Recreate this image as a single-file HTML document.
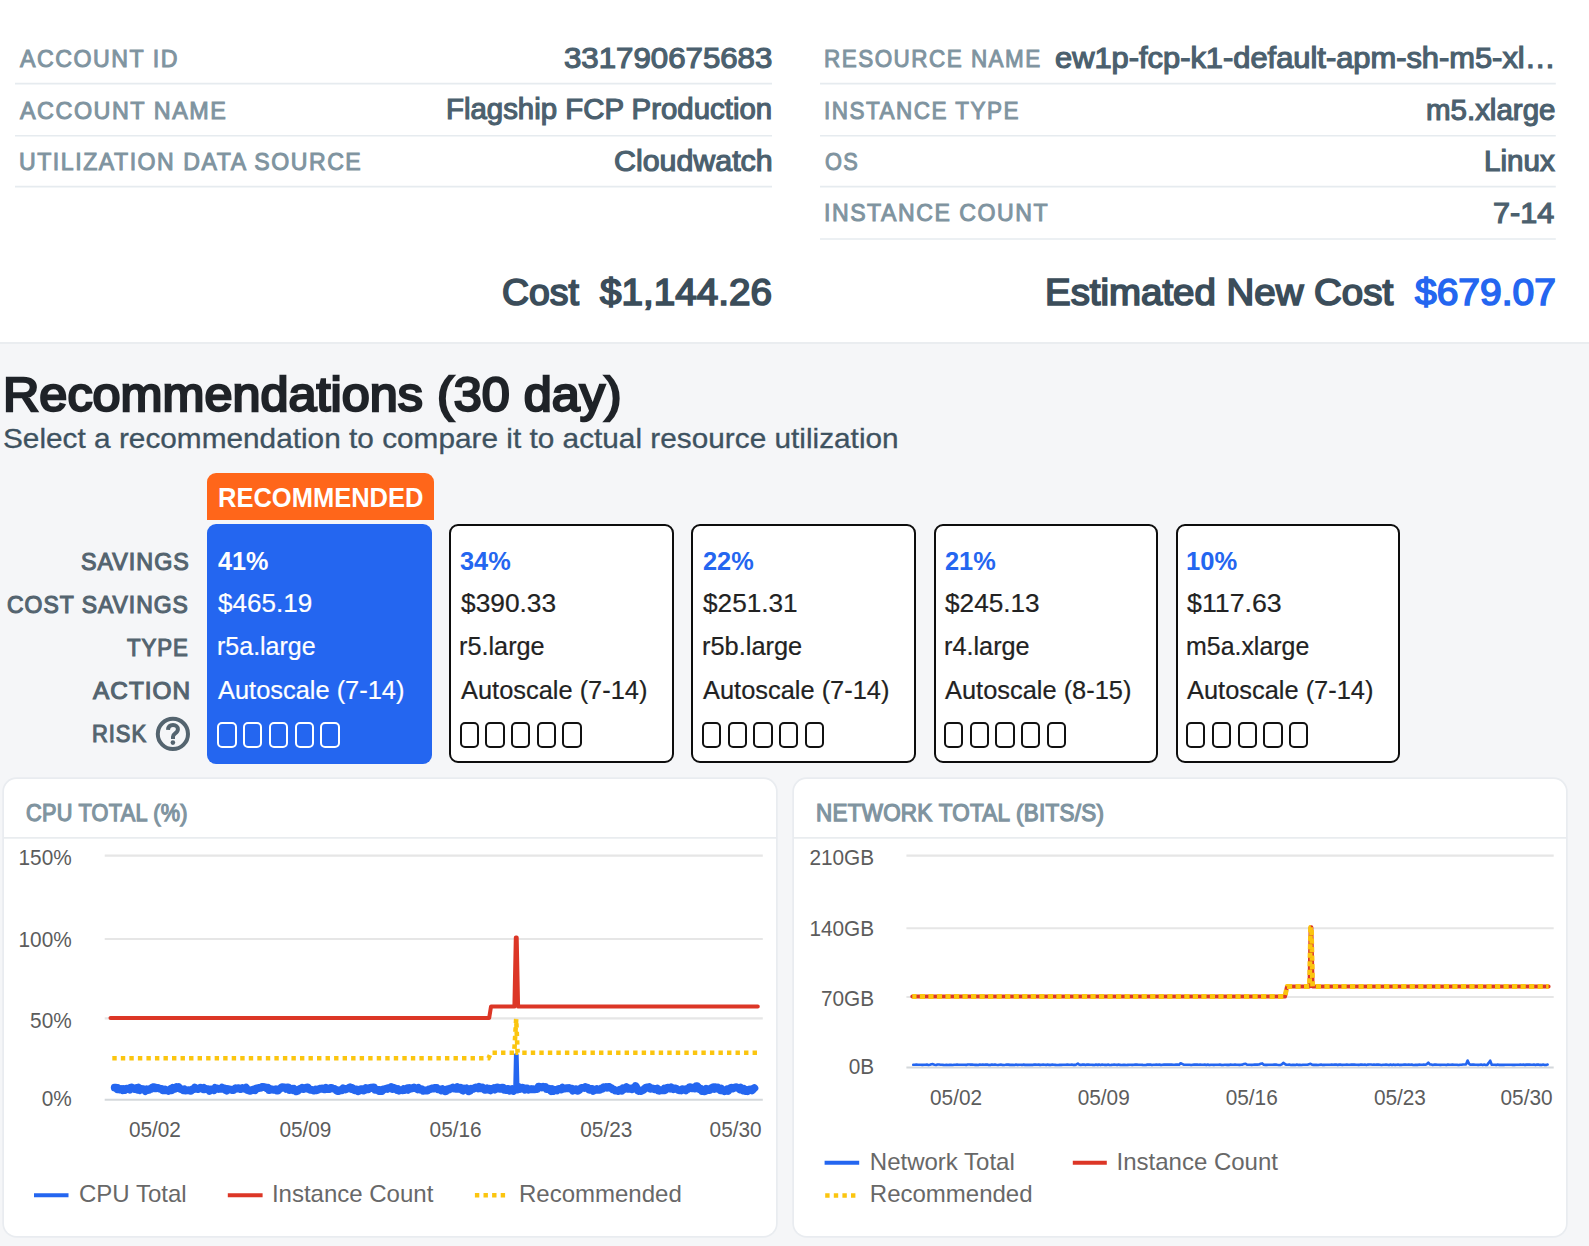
<!DOCTYPE html>
<html><head><meta charset="utf-8"><title>Rightsizing</title>
<style>
html,body{margin:0;padding:0}
body{width:1589px;height:1246px;position:relative;overflow:hidden;background:#f5f6f8;font-family:"Liberation Sans", sans-serif;}
.t{position:absolute;white-space:nowrap;transform-origin:0 50%;display:block}
.ln{position:absolute;height:1.8px;background:#e6ebef}
</style></head>
<body>
<div style="position:absolute;left:0;top:0;width:1589px;height:342px;background:#fff;border-bottom:2px solid #eaedf0"></div>
<div style="position:absolute;left:207px;top:472.8px;width:226.8px;height:47.2px;background:#ff661a;border-radius:9px 9px 0 0"></div>
<div style="position:absolute;left:207.0px;top:524px;width:225.2px;height:239.8px;background:#2466f0;border-radius:9px"></div>
<div style="position:absolute;left:217.40px;top:722px;width:19.3px;height:25.9px;border:2px solid #fff;border-radius:5px;box-sizing:border-box"></div>
<div style="position:absolute;left:243.12px;top:722px;width:19.3px;height:25.9px;border:2px solid #fff;border-radius:5px;box-sizing:border-box"></div>
<div style="position:absolute;left:268.84px;top:722px;width:19.3px;height:25.9px;border:2px solid #fff;border-radius:5px;box-sizing:border-box"></div>
<div style="position:absolute;left:294.56px;top:722px;width:19.3px;height:25.9px;border:2px solid #fff;border-radius:5px;box-sizing:border-box"></div>
<div style="position:absolute;left:320.28px;top:722px;width:19.3px;height:25.9px;border:2px solid #fff;border-radius:5px;box-sizing:border-box"></div>
<div style="position:absolute;left:449.2px;top:524px;width:224.5px;height:239.4px;background:#fff;border:2.1px solid #0d0d0d;border-radius:9px;box-sizing:border-box"></div>
<div style="position:absolute;left:459.60px;top:722px;width:19.3px;height:25.9px;border:2px solid #111;border-radius:5px;box-sizing:border-box"></div>
<div style="position:absolute;left:485.32px;top:722px;width:19.3px;height:25.9px;border:2px solid #111;border-radius:5px;box-sizing:border-box"></div>
<div style="position:absolute;left:511.04px;top:722px;width:19.3px;height:25.9px;border:2px solid #111;border-radius:5px;box-sizing:border-box"></div>
<div style="position:absolute;left:536.76px;top:722px;width:19.3px;height:25.9px;border:2px solid #111;border-radius:5px;box-sizing:border-box"></div>
<div style="position:absolute;left:562.48px;top:722px;width:19.3px;height:25.9px;border:2px solid #111;border-radius:5px;box-sizing:border-box"></div>
<div style="position:absolute;left:691.4px;top:524px;width:224.5px;height:239.4px;background:#fff;border:2.1px solid #0d0d0d;border-radius:9px;box-sizing:border-box"></div>
<div style="position:absolute;left:701.80px;top:722px;width:19.3px;height:25.9px;border:2px solid #111;border-radius:5px;box-sizing:border-box"></div>
<div style="position:absolute;left:727.52px;top:722px;width:19.3px;height:25.9px;border:2px solid #111;border-radius:5px;box-sizing:border-box"></div>
<div style="position:absolute;left:753.24px;top:722px;width:19.3px;height:25.9px;border:2px solid #111;border-radius:5px;box-sizing:border-box"></div>
<div style="position:absolute;left:778.96px;top:722px;width:19.3px;height:25.9px;border:2px solid #111;border-radius:5px;box-sizing:border-box"></div>
<div style="position:absolute;left:804.68px;top:722px;width:19.3px;height:25.9px;border:2px solid #111;border-radius:5px;box-sizing:border-box"></div>
<div style="position:absolute;left:933.6px;top:524px;width:224.5px;height:239.4px;background:#fff;border:2.1px solid #0d0d0d;border-radius:9px;box-sizing:border-box"></div>
<div style="position:absolute;left:944.00px;top:722px;width:19.3px;height:25.9px;border:2px solid #111;border-radius:5px;box-sizing:border-box"></div>
<div style="position:absolute;left:969.72px;top:722px;width:19.3px;height:25.9px;border:2px solid #111;border-radius:5px;box-sizing:border-box"></div>
<div style="position:absolute;left:995.44px;top:722px;width:19.3px;height:25.9px;border:2px solid #111;border-radius:5px;box-sizing:border-box"></div>
<div style="position:absolute;left:1021.16px;top:722px;width:19.3px;height:25.9px;border:2px solid #111;border-radius:5px;box-sizing:border-box"></div>
<div style="position:absolute;left:1046.88px;top:722px;width:19.3px;height:25.9px;border:2px solid #111;border-radius:5px;box-sizing:border-box"></div>
<div style="position:absolute;left:1175.8px;top:524px;width:224.5px;height:239.4px;background:#fff;border:2.1px solid #0d0d0d;border-radius:9px;box-sizing:border-box"></div>
<div style="position:absolute;left:1186.20px;top:722px;width:19.3px;height:25.9px;border:2px solid #111;border-radius:5px;box-sizing:border-box"></div>
<div style="position:absolute;left:1211.92px;top:722px;width:19.3px;height:25.9px;border:2px solid #111;border-radius:5px;box-sizing:border-box"></div>
<div style="position:absolute;left:1237.64px;top:722px;width:19.3px;height:25.9px;border:2px solid #111;border-radius:5px;box-sizing:border-box"></div>
<div style="position:absolute;left:1263.36px;top:722px;width:19.3px;height:25.9px;border:2px solid #111;border-radius:5px;box-sizing:border-box"></div>
<div style="position:absolute;left:1289.08px;top:722px;width:19.3px;height:25.9px;border:2px solid #111;border-radius:5px;box-sizing:border-box"></div>
<svg style="position:absolute;left:0;top:700px" width="220" height="60" viewBox="0 700 220 60"><circle cx="172.9" cy="733.9" r="15.1" fill="none" stroke="#54646f" stroke-width="4"/><path d="M168 729.8C168.2 726.6 170.2 725 173 725C175.9 725 177.9 726.7 177.9 729.2C177.9 731.4 176.6 732.4 175.2 733.4C173.8 734.4 173 735.2 173 736.8V739" fill="none" stroke="#54646f" stroke-width="4"/><circle cx="172.9" cy="742.6" r="2.3" fill="#54646f"/></svg>
<div style="position:absolute;left:3.8px;top:778.8px;width:772.4px;height:457.3px;background:#fff;box-shadow:0 0 0 1.7px #e9ecf0;border-radius:12.5px"></div>
<div style="position:absolute;left:793.7px;top:778.8px;width:772.4px;height:457.3px;background:#fff;box-shadow:0 0 0 1.7px #e9ecf0;border-radius:12.5px"></div>
<svg style="position:absolute;left:0;top:0" width="1589" height="1246" viewBox="0 0 1589 1246">
<line x1="15" x2="772" y1="83.6" y2="83.6" stroke="#e6ebef" stroke-width="1.6"/>
<line x1="15" x2="772" y1="135.7" y2="135.7" stroke="#e6ebef" stroke-width="1.6"/>
<line x1="15" x2="772" y1="186.6" y2="186.6" stroke="#e6ebef" stroke-width="1.6"/>
<line x1="820" x2="1555.8" y1="83.6" y2="83.6" stroke="#e6ebef" stroke-width="1.6"/>
<line x1="820" x2="1555.8" y1="135.7" y2="135.7" stroke="#e6ebef" stroke-width="1.6"/>
<line x1="820" x2="1555.8" y1="186.6" y2="186.6" stroke="#e6ebef" stroke-width="1.6"/>
<line x1="820" x2="1555.8" y1="239.0" y2="239.0" stroke="#e6ebef" stroke-width="1.6"/>
<line x1="3.8" x2="776.2" y1="837.9" y2="837.9" stroke="#e9ecef" stroke-width="1.9"/>
<line x1="793.7" x2="1566.1" y1="837.9" y2="837.9" stroke="#e9ecef" stroke-width="1.9"/>
<line x1="104.7" x2="762.8" y1="855.6" y2="855.6" stroke="#e6e6e6" stroke-width="2.1"/>
<line x1="104.7" x2="762.8" y1="939.0" y2="939.0" stroke="#e6e6e6" stroke-width="2.1"/>
<line x1="104.7" x2="762.8" y1="1018.4" y2="1018.4" stroke="#e6e6e6" stroke-width="2.1"/>
<line x1="104.7" x2="762.8" y1="1099.8" y2="1099.8" stroke="#d4d8db" stroke-width="2"/>
<path d="M114.7 1087.7 L115.8 1087.6 L117.0 1089.1 L118.1 1088.1 L119.3 1089.6 L120.4 1089.5 L121.6 1089.0 L122.7 1090.2 L123.8 1089.1 L125.0 1090.0 L126.1 1088.9 L127.3 1088.6 L128.4 1089.0 L129.6 1089.6 L130.7 1087.6 L131.8 1087.5 L133.0 1088.3 L134.1 1089.0 L135.3 1088.2 L136.4 1087.9 L137.5 1089.6 L138.7 1087.7 L139.8 1090.1 L141.0 1089.1 L142.1 1089.0 L143.3 1089.2 L144.4 1089.8 L145.5 1091.0 L146.7 1089.3 L147.8 1090.0 L149.0 1089.9 L150.1 1088.8 L151.3 1088.9 L152.4 1087.4 L153.5 1087.1 L154.7 1087.3 L155.8 1088.4 L157.0 1087.9 L158.1 1087.8 L159.3 1088.7 L160.4 1088.8 L161.5 1088.8 L162.7 1090.3 L163.8 1090.4 L165.0 1089.5 L166.1 1090.4 L167.2 1090.3 L168.4 1091.0 L169.5 1090.3 L170.7 1088.9 L171.8 1090.2 L173.0 1087.8 L174.1 1088.2 L175.2 1088.7 L176.4 1087.1 L177.5 1087.9 L178.7 1087.0 L179.8 1088.7 L181.0 1089.2 L182.1 1089.1 L183.2 1090.2 L184.4 1089.3 L185.5 1090.5 L186.7 1090.4 L187.8 1090.4 L189.0 1090.1 L190.1 1090.8 L191.2 1090.8 L192.4 1089.3 L193.5 1089.4 L194.7 1087.6 L195.8 1088.8 L196.9 1088.4 L198.1 1089.1 L199.2 1088.7 L200.4 1087.6 L201.5 1088.1 L202.7 1089.1 L203.8 1087.9 L204.9 1089.3 L206.1 1089.0 L207.2 1089.1 L208.4 1089.1 L209.5 1090.9 L210.7 1089.3 L211.8 1089.4 L212.9 1089.4 L214.1 1090.2 L215.2 1087.9 L216.4 1088.5 L217.5 1088.4 L218.7 1089.0 L219.8 1088.7 L220.9 1088.9 L222.1 1087.6 L223.2 1088.2 L224.4 1088.4 L225.5 1090.0 L226.6 1090.6 L227.8 1089.0 L228.9 1089.3 L230.1 1089.6 L231.2 1089.6 L232.4 1090.1 L233.5 1090.1 L234.6 1089.1 L235.8 1088.1 L236.9 1088.7 L238.1 1088.2 L239.2 1088.4 L240.4 1089.1 L241.5 1088.4 L242.6 1088.0 L243.8 1088.5 L244.9 1088.9 L246.1 1087.7 L247.2 1090.1 L248.4 1090.2 L249.5 1090.8 L250.6 1090.8 L251.8 1090.0 L252.9 1090.0 L254.1 1089.2 L255.2 1090.2 L256.3 1088.5 L257.5 1088.1 L258.6 1088.1 L259.8 1087.6 L260.9 1087.8 L262.1 1086.9 L263.2 1086.8 L264.3 1087.2 L265.5 1087.3 L266.6 1088.2 L267.8 1087.7 L268.9 1090.1 L270.1 1089.9 L271.2 1089.1 L272.3 1089.5 L273.5 1089.9 L274.6 1089.9 L275.8 1089.2 L276.9 1090.7 L278.1 1090.7 L279.2 1089.0 L280.3 1088.7 L281.5 1087.4 L282.6 1087.2 L283.8 1087.6 L284.9 1087.4 L286.0 1088.8 L287.2 1087.4 L288.3 1087.4 L289.5 1090.0 L290.6 1089.4 L291.8 1088.8 L292.9 1090.1 L294.0 1089.0 L295.2 1090.3 L296.3 1091.4 L297.5 1090.9 L298.6 1090.2 L299.8 1088.9 L300.9 1088.7 L302.0 1087.9 L303.2 1089.0 L304.3 1088.2 L305.5 1088.6 L306.6 1087.6 L307.8 1087.4 L308.9 1089.1 L310.0 1089.8 L311.2 1089.8 L312.3 1090.1 L313.5 1090.5 L314.6 1090.6 L315.7 1089.5 L316.9 1090.3 L318.0 1089.8 L319.2 1088.9 L320.3 1088.6 L321.5 1088.8 L322.6 1088.4 L323.7 1089.1 L324.9 1089.4 L326.0 1087.9 L327.2 1089.0 L328.3 1089.1 L329.5 1089.2 L330.6 1088.0 L331.7 1088.0 L332.9 1088.4 L334.0 1088.7 L335.2 1089.1 L336.3 1090.3 L337.5 1091.2 L338.6 1091.1 L339.7 1090.1 L340.9 1090.3 L342.0 1090.4 L343.2 1088.3 L344.3 1089.3 L345.4 1089.5 L346.6 1088.9 L347.7 1088.6 L348.9 1087.9 L350.0 1087.2 L351.2 1088.8 L352.3 1088.0 L353.4 1089.5 L354.6 1090.3 L355.7 1089.3 L356.9 1089.6 L358.0 1091.2 L359.2 1090.8 L360.3 1089.4 L361.4 1089.2 L362.6 1089.1 L363.7 1090.6 L364.9 1090.0 L366.0 1088.0 L367.2 1089.3 L368.3 1089.4 L369.4 1088.4 L370.6 1087.6 L371.7 1088.1 L372.9 1087.3 L374.0 1087.3 L375.1 1089.9 L376.3 1089.6 L377.4 1089.6 L378.6 1090.9 L379.7 1090.0 L380.9 1091.1 L382.0 1091.0 L383.1 1089.4 L384.3 1089.3 L385.4 1089.0 L386.6 1088.5 L387.7 1089.0 L388.9 1087.9 L390.0 1088.0 L391.1 1087.1 L392.3 1088.9 L393.4 1087.7 L394.6 1088.1 L395.7 1088.7 L396.9 1089.9 L398.0 1089.1 L399.1 1090.6 L400.3 1089.9 L401.4 1090.2 L402.6 1090.3 L403.7 1089.1 L404.8 1089.9 L406.0 1089.0 L407.1 1088.3 L408.3 1089.8 L409.4 1087.9 L410.6 1088.3 L411.7 1088.7 L412.8 1088.1 L414.0 1087.5 L415.1 1088.1 L416.3 1088.4 L417.4 1089.3 L418.6 1088.0 L419.7 1089.5 L420.8 1089.1 L422.0 1089.4 L423.1 1090.8 L424.3 1090.3 L425.4 1090.3 L426.6 1090.6 L427.7 1090.7 L428.8 1089.3 L430.0 1089.3 L431.1 1088.7 L432.3 1088.4 L433.4 1088.6 L434.5 1087.9 L435.7 1088.0 L436.8 1088.0 L438.0 1089.4 L439.1 1089.1 L440.3 1089.9 L441.4 1090.5 L442.5 1089.2 L443.7 1090.2 L444.8 1091.3 L446.0 1091.1 L447.1 1089.3 L448.3 1089.1 L449.4 1089.6 L450.5 1088.3 L451.7 1088.3 L452.8 1087.6 L454.0 1088.7 L455.1 1088.7 L456.3 1088.9 L457.4 1087.1 L458.5 1088.6 L459.7 1088.8 L460.8 1087.9 L462.0 1090.0 L463.1 1090.6 L464.3 1088.5 L465.4 1089.6 L466.5 1088.4 L467.7 1089.6 L468.8 1091.3 L470.0 1090.7 L471.1 1088.8 L472.2 1089.1 L473.4 1088.9 L474.5 1088.1 L475.7 1087.5 L476.8 1087.6 L478.0 1088.5 L479.1 1086.8 L480.2 1088.3 L481.4 1088.3 L482.5 1087.6 L483.7 1088.8 L484.8 1089.8 L486.0 1089.9 L487.1 1088.5 L488.2 1089.7 L489.4 1088.8 L490.5 1090.3 L491.7 1088.9 L492.8 1089.0 L494.0 1088.1 L495.1 1089.5 L496.2 1087.9 L497.4 1087.3 L498.5 1087.8 L499.7 1088.9 L500.8 1088.8 L501.9 1087.6 L503.1 1087.6 L504.2 1089.8 L505.4 1089.4 L506.5 1090.1 L507.7 1088.9 L508.8 1089.1 L509.9 1090.7 L511.1 1090.0 L512.2 1089.1 L513.4 1090.9 L514.5 1089.8 L515.7 1089.9 L516.8 1087.8 L517.9 1089.3 L519.1 1087.1 L520.2 1088.9 L521.4 1087.8 L522.5 1087.7 L523.7 1088.4 L524.8 1089.6 L525.9 1088.4 L527.1 1088.4 L528.2 1089.7 L529.4 1089.3 L530.5 1089.2 L531.6 1089.4 L532.8 1089.1 L533.9 1089.3 L535.1 1089.3 L536.2 1089.0 L537.4 1089.0 L538.5 1086.6 L539.6 1086.9 L540.8 1086.8 L541.9 1087.6 L543.1 1086.8 L544.2 1087.5 L545.4 1087.1 L546.5 1089.2 L547.6 1089.1 L548.8 1088.6 L549.9 1089.7 L551.1 1091.0 L552.2 1089.2 L553.4 1091.0 L554.5 1090.0 L555.6 1090.0 L556.8 1090.5 L557.9 1089.1 L559.1 1089.0 L560.2 1089.1 L561.3 1089.5 L562.5 1087.7 L563.6 1088.8 L564.8 1088.5 L565.9 1088.4 L567.1 1088.1 L568.2 1088.3 L569.3 1088.0 L570.5 1088.5 L571.6 1088.7 L572.8 1090.6 L573.9 1089.6 L575.1 1089.4 L576.2 1089.2 L577.3 1090.8 L578.5 1090.6 L579.6 1089.7 L580.8 1088.4 L581.9 1087.9 L583.1 1087.8 L584.2 1088.0 L585.3 1087.1 L586.5 1087.9 L587.6 1087.6 L588.8 1089.5 L589.9 1089.9 L591.0 1089.2 L592.2 1088.9 L593.3 1090.9 L594.5 1089.6 L595.6 1089.9 L596.8 1089.0 L597.9 1089.9 L599.0 1089.9 L600.2 1089.6 L601.3 1088.5 L602.5 1088.9 L603.6 1087.3 L604.8 1087.6 L605.9 1087.0 L607.0 1087.7 L608.2 1086.9 L609.3 1087.0 L610.5 1088.0 L611.6 1088.2 L612.8 1089.4 L613.9 1089.6 L615.0 1090.5 L616.2 1090.5 L617.3 1090.8 L618.5 1091.1 L619.6 1089.8 L620.7 1089.5 L621.9 1090.7 L623.0 1088.3 L624.2 1089.3 L625.3 1088.8 L626.5 1087.1 L627.6 1088.8 L628.7 1088.9 L629.9 1088.3 L631.0 1088.8 L632.2 1089.3 L633.3 1088.0 L634.5 1088.3 L635.6 1086.0 L636.7 1087.9 L637.9 1090.6 L639.0 1091.0 L640.2 1090.4 L641.3 1091.0 L642.5 1090.3 L643.6 1089.9 L644.7 1088.5 L645.9 1087.6 L647.0 1087.5 L648.2 1087.8 L649.3 1087.0 L650.4 1088.8 L651.6 1088.2 L652.7 1088.6 L653.9 1088.9 L655.0 1089.4 L656.2 1089.3 L657.3 1088.5 L658.4 1090.7 L659.6 1090.8 L660.7 1090.3 L661.9 1090.3 L663.0 1090.4 L664.2 1088.7 L665.3 1090.0 L666.4 1088.4 L667.6 1087.6 L668.7 1087.8 L669.9 1088.6 L671.0 1087.3 L672.2 1088.5 L673.3 1089.2 L674.4 1088.3 L675.6 1088.4 L676.7 1089.0 L677.9 1089.8 L679.0 1090.4 L680.1 1090.3 L681.3 1090.5 L682.4 1089.2 L683.6 1089.3 L684.7 1089.4 L685.9 1090.3 L687.0 1088.9 L688.1 1089.1 L689.3 1087.4 L690.4 1087.2 L691.6 1087.5 L692.7 1088.4 L693.9 1088.4 L695.0 1088.5 L696.1 1086.2 L697.3 1086.2 L698.4 1088.1 L699.6 1089.4 L700.7 1088.9 L701.9 1091.0 L703.0 1089.5 L704.1 1091.4 L705.3 1091.2 L706.4 1088.8 L707.6 1089.5 L708.7 1090.0 L709.8 1090.0 L711.0 1088.4 L712.1 1087.7 L713.3 1087.3 L714.4 1089.0 L715.6 1087.3 L716.7 1088.4 L717.8 1087.6 L719.0 1088.8 L720.1 1090.2 L721.3 1088.6 L722.4 1090.6 L723.6 1090.1 L724.7 1091.2 L725.8 1090.7 L727.0 1089.5 L728.1 1090.9 L729.3 1089.5 L730.4 1088.1 L731.6 1087.6 L732.7 1088.5 L733.8 1088.1 L735.0 1087.5 L736.1 1087.1 L737.3 1087.6 L738.4 1087.8 L739.5 1089.3 L740.7 1087.6 L741.8 1089.8 L743.0 1090.4 L744.1 1089.0 L745.3 1091.1 L746.4 1090.8 L747.5 1091.2 L748.7 1089.6 L749.8 1089.5 L751.0 1089.3 L752.1 1090.3 L753.3 1089.0 L754.4 1088.1" fill="none" stroke="#2466f0" stroke-width="7.8" stroke-linejoin="round" stroke-linecap="round"/>
<path d="M515.3 1088 L516 1055 L516.6 1055 L517.4 1088" fill="none" stroke="#2466f0" stroke-width="4.2" stroke-linejoin="round" stroke-linecap="round"/>
<path d="M110.5 1017.9 H489.2 L491 1006.6 H514.4 L515.8 937.5 L516.7 937.5 L518.1 1006.6 H757.8" fill="none" stroke="#dc3626" stroke-width="4" stroke-linecap="round" stroke-linejoin="round"/>
<path d="M112.3 1058.3 H488.5 L491 1052.7 H514.2 L516.2 1019 L517.6 1052.7 H757.5" fill="none" stroke="#fbc50f" stroke-width="4.6" stroke-dasharray="4.4 4.13" stroke-linejoin="miter"/>
<line x1="906.4" x2="1553.7" y1="855.6" y2="855.6" stroke="#e6e6e6" stroke-width="2.1"/>
<line x1="906.4" x2="1553.7" y1="928.2" y2="928.2" stroke="#e6e6e6" stroke-width="2.1"/>
<line x1="906.4" x2="1553.7" y1="997.0" y2="997.0" stroke="#e6e6e6" stroke-width="2.1"/>
<line x1="906.4" x2="1553.7" y1="1067.6" y2="1067.6" stroke="#d4d8db" stroke-width="2"/>
<path d="M912.3 996.5 H1285 L1287 986.5 H1309.5 L1310.6 927.3 L1311.4 927.3 L1312.6 986.5 H1548.6" fill="none" stroke="#dc3626" stroke-width="4" stroke-linecap="round" stroke-linejoin="round"/>
<path d="M912.3 996.5 H1285 L1287 986.5 H1309.5 L1310.6 927.3 L1311.4 927.3 L1312.6 986.5 H1548.6" fill="none" stroke="#fbc50f" stroke-width="4.8" stroke-dasharray="5.2 3.33" stroke-dashoffset="1" stroke-linejoin="round"/>
<path d="M913.3 1064.8 L914.8 1064.7 L916.3 1064.5 L917.8 1064.8 L919.3 1064.7 L920.9 1064.7 L922.4 1064.9 L923.9 1064.7 L925.4 1064.7 L926.9 1064.6 L928.4 1065.0 L929.9 1064.8 L931.4 1064.3 L932.9 1064.1 L934.4 1064.7 L936.0 1065.0 L937.5 1064.5 L939.0 1064.5 L940.5 1064.7 L942.0 1064.7 L943.5 1064.9 L945.0 1065.0 L946.5 1064.7 L948.0 1065.0 L949.5 1064.9 L951.1 1064.9 L952.6 1065.0 L954.1 1064.8 L955.6 1064.8 L957.1 1064.6 L958.6 1064.7 L960.1 1064.7 L961.6 1064.8 L963.1 1064.7 L964.6 1064.8 L966.2 1064.9 L967.7 1064.5 L969.2 1064.5 L970.7 1064.6 L972.2 1064.6 L973.7 1064.8 L975.2 1064.9 L976.7 1064.9 L978.2 1065.0 L979.8 1064.6 L981.3 1064.8 L982.8 1064.6 L984.3 1064.8 L985.8 1064.5 L987.3 1064.6 L988.8 1065.0 L990.3 1064.9 L991.8 1064.5 L993.3 1064.8 L994.9 1064.5 L996.4 1064.8 L997.9 1065.0 L999.4 1064.7 L1000.9 1064.6 L1002.4 1064.9 L1003.9 1065.0 L1005.4 1064.8 L1006.9 1064.5 L1008.4 1064.6 L1010.0 1064.9 L1011.5 1064.9 L1013.0 1064.9 L1014.5 1065.0 L1016.0 1064.6 L1017.5 1064.9 L1019.0 1064.7 L1020.5 1064.8 L1022.0 1064.9 L1023.5 1064.6 L1025.1 1064.9 L1026.6 1064.7 L1028.1 1064.9 L1029.6 1064.8 L1031.1 1064.9 L1032.6 1064.9 L1034.1 1064.5 L1035.6 1064.6 L1037.1 1064.8 L1038.6 1064.6 L1040.2 1064.9 L1041.7 1064.8 L1043.2 1064.6 L1044.7 1064.7 L1046.2 1064.9 L1047.7 1064.5 L1049.2 1064.9 L1050.7 1064.9 L1052.2 1064.6 L1053.8 1064.8 L1055.3 1064.9 L1056.8 1065.0 L1058.3 1065.0 L1059.8 1064.7 L1061.3 1064.9 L1062.8 1064.7 L1064.3 1064.8 L1065.8 1064.8 L1067.3 1064.5 L1068.9 1064.8 L1070.4 1064.7 L1071.9 1064.6 L1073.4 1064.9 L1074.9 1064.9 L1076.4 1064.4 L1077.9 1063.6 L1079.4 1064.7 L1080.9 1064.9 L1082.4 1064.6 L1084.0 1064.5 L1085.5 1064.9 L1087.0 1064.5 L1088.5 1064.6 L1090.0 1064.7 L1091.5 1064.8 L1093.0 1064.9 L1094.5 1065.0 L1096.0 1064.5 L1097.5 1064.9 L1099.1 1064.6 L1100.6 1064.9 L1102.1 1064.6 L1103.6 1064.7 L1105.1 1064.9 L1106.6 1064.9 L1108.1 1064.6 L1109.6 1065.0 L1111.1 1064.9 L1112.7 1064.7 L1114.2 1064.6 L1115.7 1064.7 L1117.2 1064.9 L1118.7 1064.5 L1120.2 1064.9 L1121.7 1065.0 L1123.2 1064.9 L1124.7 1064.8 L1126.2 1065.0 L1127.8 1064.9 L1129.3 1064.8 L1130.8 1064.7 L1132.3 1064.9 L1133.8 1064.8 L1135.3 1064.6 L1136.8 1064.5 L1138.3 1064.7 L1139.8 1064.7 L1141.3 1064.7 L1142.9 1064.9 L1144.4 1065.0 L1145.9 1065.0 L1147.4 1064.5 L1148.9 1064.6 L1150.4 1064.5 L1151.9 1065.0 L1153.4 1064.7 L1154.9 1064.8 L1156.4 1064.6 L1158.0 1064.8 L1159.5 1064.5 L1161.0 1065.0 L1162.5 1064.7 L1164.0 1064.6 L1165.5 1064.5 L1167.0 1064.6 L1168.5 1064.6 L1170.0 1064.6 L1171.6 1064.5 L1173.1 1064.8 L1174.6 1064.7 L1176.1 1064.5 L1177.6 1064.6 L1179.1 1064.8 L1180.6 1063.2 L1182.1 1063.9 L1183.6 1064.7 L1185.1 1064.7 L1186.7 1064.8 L1188.2 1064.7 L1189.7 1064.7 L1191.2 1065.0 L1192.7 1064.7 L1194.2 1064.5 L1195.7 1064.6 L1197.2 1064.6 L1198.7 1064.8 L1200.2 1064.6 L1201.8 1064.7 L1203.3 1064.8 L1204.8 1064.6 L1206.3 1065.0 L1207.8 1064.6 L1209.3 1065.0 L1210.8 1064.7 L1212.3 1064.8 L1213.8 1064.9 L1215.3 1064.7 L1216.9 1064.8 L1218.4 1064.7 L1219.9 1064.5 L1221.4 1064.9 L1222.9 1065.0 L1224.4 1064.8 L1225.9 1064.7 L1227.4 1064.9 L1228.9 1064.9 L1230.4 1064.5 L1232.0 1064.7 L1233.5 1064.8 L1235.0 1064.6 L1236.5 1064.8 L1238.0 1064.7 L1239.5 1064.9 L1241.0 1064.8 L1242.5 1064.6 L1244.0 1064.0 L1245.6 1063.7 L1247.1 1064.8 L1248.6 1064.7 L1250.1 1064.8 L1251.6 1064.9 L1253.1 1064.8 L1254.6 1064.6 L1256.1 1064.6 L1257.6 1064.6 L1259.1 1064.5 L1260.7 1063.8 L1262.2 1063.4 L1263.7 1064.8 L1265.2 1064.9 L1266.7 1064.9 L1268.2 1064.8 L1269.7 1064.7 L1271.2 1064.8 L1272.7 1064.8 L1274.2 1064.6 L1275.8 1064.5 L1277.3 1064.8 L1278.8 1065.0 L1280.3 1065.0 L1281.8 1064.4 L1283.3 1062.8 L1284.8 1064.0 L1286.3 1064.7 L1287.8 1064.8 L1289.3 1064.6 L1290.9 1065.0 L1292.4 1064.9 L1293.9 1064.8 L1295.4 1065.0 L1296.9 1064.6 L1298.4 1064.9 L1299.9 1064.9 L1301.4 1065.0 L1302.9 1064.7 L1304.5 1064.8 L1306.0 1064.7 L1307.5 1064.7 L1309.0 1064.2 L1310.5 1063.8 L1312.0 1064.7 L1313.5 1064.9 L1315.0 1064.8 L1316.5 1064.9 L1318.0 1065.0 L1319.6 1064.8 L1321.1 1064.6 L1322.6 1064.9 L1324.1 1064.9 L1325.6 1064.8 L1327.1 1064.7 L1328.6 1064.7 L1330.1 1064.7 L1331.6 1064.6 L1333.1 1064.8 L1334.7 1064.6 L1336.2 1064.5 L1337.7 1065.0 L1339.2 1064.5 L1340.7 1064.6 L1342.2 1064.9 L1343.7 1064.8 L1345.2 1064.7 L1346.7 1064.5 L1348.2 1064.8 L1349.8 1064.7 L1351.3 1064.6 L1352.8 1064.6 L1354.3 1064.5 L1355.8 1064.8 L1357.3 1064.7 L1358.8 1064.9 L1360.3 1064.6 L1361.8 1064.6 L1363.4 1064.7 L1364.9 1064.6 L1366.4 1064.9 L1367.9 1064.6 L1369.4 1064.5 L1370.9 1064.5 L1372.4 1064.7 L1373.9 1064.6 L1375.4 1064.8 L1376.9 1064.5 L1378.5 1064.6 L1380.0 1064.8 L1381.5 1065.0 L1383.0 1064.8 L1384.5 1064.7 L1386.0 1064.6 L1387.5 1064.8 L1389.0 1065.0 L1390.5 1064.6 L1392.0 1065.0 L1393.6 1064.6 L1395.1 1064.9 L1396.6 1064.8 L1398.1 1064.6 L1399.6 1064.9 L1401.1 1064.9 L1402.6 1064.7 L1404.1 1064.6 L1405.6 1064.6 L1407.1 1064.7 L1408.7 1064.5 L1410.2 1064.8 L1411.7 1064.5 L1413.2 1065.0 L1414.7 1064.9 L1416.2 1064.7 L1417.7 1064.9 L1419.2 1064.6 L1420.7 1064.7 L1422.3 1064.7 L1423.8 1064.6 L1425.3 1064.7 L1426.8 1064.2 L1428.3 1062.7 L1429.8 1064.4 L1431.3 1064.5 L1432.8 1064.9 L1434.3 1064.6 L1435.8 1064.5 L1437.4 1064.7 L1438.9 1064.7 L1440.4 1064.9 L1441.9 1064.7 L1443.4 1064.7 L1444.9 1064.7 L1446.4 1065.0 L1447.9 1064.5 L1449.4 1064.7 L1450.9 1064.8 L1452.5 1064.6 L1454.0 1064.7 L1455.5 1064.8 L1457.0 1064.7 L1458.5 1065.0 L1460.0 1064.7 L1461.5 1064.8 L1463.0 1064.5 L1464.5 1064.5 L1466.0 1064.5 L1467.6 1060.5 L1469.1 1063.8 L1470.6 1064.8 L1472.1 1064.6 L1473.6 1064.5 L1475.1 1064.8 L1476.6 1064.8 L1478.1 1064.9 L1479.6 1064.7 L1481.1 1064.5 L1482.7 1064.9 L1484.2 1064.6 L1485.7 1065.0 L1487.2 1064.9 L1488.7 1062.9 L1490.2 1060.6 L1491.7 1064.8 L1493.2 1064.8 L1494.7 1064.7 L1496.3 1064.9 L1497.8 1064.6 L1499.3 1064.9 L1500.8 1064.7 L1502.3 1064.9 L1503.8 1064.9 L1505.3 1064.7 L1506.8 1064.8 L1508.3 1064.8 L1509.8 1064.8 L1511.4 1064.7 L1512.9 1064.9 L1514.4 1064.9 L1515.9 1064.7 L1517.4 1064.7 L1518.9 1064.7 L1520.4 1064.6 L1521.9 1064.7 L1523.4 1064.6 L1524.9 1064.9 L1526.5 1064.6 L1528.0 1064.6 L1529.5 1064.5 L1531.0 1064.8 L1532.5 1064.8 L1534.0 1064.5 L1535.5 1064.9 L1537.0 1064.5 L1538.5 1064.6 L1540.0 1064.9 L1541.6 1064.9 L1543.1 1064.6 L1544.6 1064.9 L1546.1 1065.0 L1547.6 1064.6" fill="none" stroke="#2466f0" stroke-width="2.6" stroke-linejoin="round" stroke-linecap="round"/>
<line x1="34" x2="68.5" y1="1195.3" y2="1195.3" stroke="#2466f0" stroke-width="4"/>
<line x1="227.8" x2="262.6" y1="1195.3" y2="1195.3" stroke="#dc3626" stroke-width="4"/>
<line x1="474.9" x2="506" y1="1195.3" y2="1195.3" stroke="#fbc50f" stroke-width="4.4" stroke-dasharray="4.4 4.2"/>
<line x1="824.6" x2="859.2" y1="1162.7" y2="1162.7" stroke="#2466f0" stroke-width="4"/>
<line x1="1072.8" x2="1106.8" y1="1162.7" y2="1162.7" stroke="#dc3626" stroke-width="4"/>
<line x1="825.2" x2="856" y1="1195.5" y2="1195.5" stroke="#fbc50f" stroke-width="4.4" stroke-dasharray="4.4 4.2"/>
</svg>
<span class="t" style="left:20.10px;top:45.30px;font-size:24.3px;line-height:27px;color:#7f94a0;-webkit-text-stroke:1.0px #7f94a0;letter-spacing:1.6px;transform-origin:0 22px;transform:scale(0.9537,1.000);">ACCOUNT ID</span>
<span class="t" style="left:20.10px;top:96.80px;font-size:24.3px;line-height:27px;color:#7f94a0;-webkit-text-stroke:1.0px #7f94a0;letter-spacing:1.6px;transform-origin:0 22px;transform:scale(0.9605,1.000);">ACCOUNT NAME</span>
<span class="t" style="left:19.15px;top:148.00px;font-size:24.3px;line-height:27px;color:#7f94a0;-webkit-text-stroke:1.0px #7f94a0;letter-spacing:1.6px;transform-origin:0 22px;transform:scale(0.9515,1.000);">UTILIZATION DATA SOURCE</span>
<span class="t" style="left:563.88px;top:41.72px;font-size:28.6px;line-height:32px;color:#4b606e;-webkit-text-stroke:1.15px #4b606e;transform-origin:0 26px;transform:scale(1.0917,1.000);">331790675683</span>
<span class="t" style="left:445.52px;top:93.33px;font-size:28.6px;line-height:32px;color:#4b606e;-webkit-text-stroke:1.15px #4b606e;transform-origin:0 26px;transform:scale(1.0276,1.000);">Flagship FCP Production</span>
<span class="t" style="left:613.51px;top:144.62px;font-size:28.6px;line-height:32px;color:#4b606e;-webkit-text-stroke:1.15px #4b606e;transform-origin:0 26px;transform:scale(1.0620,1.000);">Cloudwatch</span>
<span class="t" style="left:823.85px;top:45.30px;font-size:24.3px;line-height:27px;color:#7f94a0;-webkit-text-stroke:1.0px #7f94a0;letter-spacing:1.6px;transform-origin:0 22px;transform:scale(0.9247,1.000);">RESOURCE NAME</span>
<span class="t" style="left:823.85px;top:96.50px;font-size:24.3px;line-height:27px;color:#7f94a0;-webkit-text-stroke:1.0px #7f94a0;letter-spacing:1.6px;transform-origin:0 22px;transform:scale(0.9258,1.000);">INSTANCE TYPE</span>
<span class="t" style="left:824.80px;top:147.70px;font-size:24.3px;line-height:27px;color:#7f94a0;-webkit-text-stroke:1.0px #7f94a0;letter-spacing:1.6px;transform-origin:0 22px;transform:scale(0.8958,1.000);">OS</span>
<span class="t" style="left:823.80px;top:199.30px;font-size:24.3px;line-height:27px;color:#7f94a0;-webkit-text-stroke:1.0px #7f94a0;letter-spacing:1.6px;transform-origin:0 22px;transform:scale(0.9514,1.000);">INSTANCE COUNT</span>
<span class="t" style="left:1055.00px;top:41.72px;font-size:28.6px;line-height:32px;color:#4b606e;-webkit-text-stroke:1.15px #4b606e;transform-origin:0 26px;transform:scale(1.0787,1.000);">ew1p-fcp-k1-default-apm-sh-m5-xl…</span>
<span class="t" style="left:1425.94px;top:93.52px;font-size:28.6px;line-height:32px;color:#4b606e;-webkit-text-stroke:1.15px #4b606e;transform-origin:0 26px;transform:scale(1.0308,1.000);">m5.xlarge</span>
<span class="t" style="left:1484.01px;top:144.93px;font-size:28.6px;line-height:32px;color:#4b606e;-webkit-text-stroke:1.15px #4b606e;transform-origin:0 26px;transform:scale(1.0347,1.000);">Linux</span>
<span class="t" style="left:1493.11px;top:197.03px;font-size:28.6px;line-height:32px;color:#4b606e;-webkit-text-stroke:1.15px #4b606e;transform-origin:0 26px;transform:scale(1.0696,1.000);">7-14</span>
<span class="t" style="left:501.53px;top:271.55px;font-size:36.6px;line-height:41px;color:#3b4d5a;-webkit-text-stroke:1.7px #3b4d5a;transform-origin:0 33px;transform:scale(1.0223,1.000);">Cost</span>
<span class="t" style="left:600.05px;top:271.55px;font-size:36.6px;line-height:41px;color:#3b4d5a;-webkit-text-stroke:1.7px #3b4d5a;transform-origin:0 33px;transform:scale(1.0565,1.000);">$1,144.26</span>
<span class="t" style="left:1044.60px;top:271.65px;font-size:36.6px;line-height:41px;color:#3b4d5a;-webkit-text-stroke:1.7px #3b4d5a;transform-origin:0 33px;transform:scale(1.0506,1.000);">Estimated New Cost</span>
<span class="t" style="left:1415.00px;top:271.70px;font-size:36.6px;line-height:41px;color:#2466f0;-webkit-text-stroke:1.6px #2466f0;transform-origin:0 33px;transform:scale(1.0651,1.000);">$679.07</span>
<span class="t" style="left:3.25px;top:368.00px;font-size:48.0px;line-height:53px;color:#1f2328;-webkit-text-stroke:2.4px #1f2328;transform-origin:0 43px;transform:scale(1.0492,1.000);">Recommendations (30 day)</span>
<span class="t" style="left:2.56px;top:423.25px;font-size:27.4px;line-height:31px;color:#3e5260;-webkit-text-stroke:0.3px #3e5260;transform-origin:0 25px;transform:scale(1.0874,1.000);">Select a recommendation to compare it to actual resource utilization</span>
<span class="t" style="left:218.25px;top:482.90px;font-size:26.9px;line-height:30px;color:#ffffff;font-weight:700;transform-origin:0 24px;transform:scale(0.9484,1.000);">RECOMMENDED</span>
<span class="t" style="left:80.55px;top:548.95px;font-size:23.2px;line-height:26px;color:#54646f;-webkit-text-stroke:1.1px #54646f;letter-spacing:1.0px;transform-origin:0 21px;transform:scale(1.0038,1.000);">SAVINGS</span>
<span class="t" style="left:7.06px;top:591.85px;font-size:23.2px;line-height:26px;color:#54646f;-webkit-text-stroke:1.1px #54646f;letter-spacing:1.0px;transform-origin:0 21px;transform:scale(0.9893,1.000);">COST SAVINGS</span>
<span class="t" style="left:127.45px;top:634.85px;font-size:23.2px;line-height:26px;color:#54646f;-webkit-text-stroke:1.1px #54646f;letter-spacing:1.0px;transform-origin:0 21px;transform:scale(0.9573,1.000);">TYPE</span>
<span class="t" style="left:92.55px;top:677.75px;font-size:23.2px;line-height:26px;color:#54646f;-webkit-text-stroke:1.1px #54646f;letter-spacing:1.0px;transform-origin:0 21px;transform:scale(1.0489,1.000);">ACTION</span>
<span class="t" style="left:92.20px;top:720.75px;font-size:23.2px;line-height:26px;color:#54646f;-webkit-text-stroke:1.1px #54646f;letter-spacing:1.0px;transform-origin:0 21px;transform:scale(0.9461,1.000);">RISK</span>
<span class="t" style="left:218.20px;top:546.70px;font-size:24.9px;line-height:28px;color:#ffffff;font-weight:700;transform-origin:0 23px;transform:scale(1.0124,1.000);">41%</span>
<span class="t" style="left:218.30px;top:589.30px;font-size:24.9px;line-height:28px;color:#ffffff;-webkit-text-stroke:0.2px #ffffff;transform-origin:0 23px;transform:scale(1.0468,1.000);">$465.19</span>
<span class="t" style="left:217.30px;top:631.90px;font-size:24.9px;line-height:28px;color:#ffffff;-webkit-text-stroke:0.2px #ffffff;transform-origin:0 23px;transform:scale(1.0042,1.000);">r5a.large</span>
<span class="t" style="left:218.30px;top:675.90px;font-size:24.9px;line-height:28px;color:#ffffff;-webkit-text-stroke:0.2px #ffffff;transform-origin:0 23px;transform:scale(1.0208,1.000);">Autoscale (7-14)</span>
<span class="t" style="left:460.40px;top:546.70px;font-size:24.9px;line-height:28px;color:#2466f0;font-weight:700;transform-origin:0 23px;transform:scale(1.0184,1.000);">34%</span>
<span class="t" style="left:460.50px;top:589.30px;font-size:24.9px;line-height:28px;color:#222222;-webkit-text-stroke:0.2px #222222;transform-origin:0 23px;transform:scale(1.0569,1.000);">$390.33</span>
<span class="t" style="left:459.48px;top:631.90px;font-size:24.9px;line-height:28px;color:#222222;-webkit-text-stroke:0.2px #222222;transform-origin:0 23px;transform:scale(1.0151,1.000);">r5.large</span>
<span class="t" style="left:460.50px;top:675.90px;font-size:24.9px;line-height:28px;color:#222222;-webkit-text-stroke:0.2px #222222;transform-origin:0 23px;transform:scale(1.0208,1.000);">Autoscale (7-14)</span>
<span class="t" style="left:702.60px;top:546.70px;font-size:24.9px;line-height:28px;color:#2466f0;font-weight:700;transform-origin:0 23px;transform:scale(1.0184,1.000);">22%</span>
<span class="t" style="left:702.70px;top:589.30px;font-size:24.9px;line-height:28px;color:#222222;-webkit-text-stroke:0.2px #222222;transform-origin:0 23px;transform:scale(1.0524,1.000);">$251.31</span>
<span class="t" style="left:701.68px;top:631.90px;font-size:24.9px;line-height:28px;color:#222222;-webkit-text-stroke:0.2px #222222;transform-origin:0 23px;transform:scale(1.0198,1.000);">r5b.large</span>
<span class="t" style="left:702.70px;top:675.90px;font-size:24.9px;line-height:28px;color:#222222;-webkit-text-stroke:0.2px #222222;transform-origin:0 23px;transform:scale(1.0208,1.000);">Autoscale (7-14)</span>
<span class="t" style="left:944.80px;top:546.70px;font-size:24.9px;line-height:28px;color:#2466f0;font-weight:700;transform-origin:0 23px;transform:scale(1.0184,1.000);">21%</span>
<span class="t" style="left:944.90px;top:589.30px;font-size:24.9px;line-height:28px;color:#222222;-webkit-text-stroke:0.2px #222222;transform-origin:0 23px;transform:scale(1.0524,1.000);">$245.13</span>
<span class="t" style="left:943.88px;top:631.90px;font-size:24.9px;line-height:28px;color:#222222;-webkit-text-stroke:0.2px #222222;transform-origin:0 23px;transform:scale(1.0151,1.000);">r4.large</span>
<span class="t" style="left:944.90px;top:675.90px;font-size:24.9px;line-height:28px;color:#222222;-webkit-text-stroke:0.2px #222222;transform-origin:0 23px;transform:scale(1.0208,1.000);">Autoscale (8-15)</span>
<span class="t" style="left:1185.97px;top:546.70px;font-size:24.9px;line-height:28px;color:#2466f0;font-weight:700;transform-origin:0 23px;transform:scale(1.0270,1.000);">10%</span>
<span class="t" style="left:1187.10px;top:589.30px;font-size:24.9px;line-height:28px;color:#222222;-webkit-text-stroke:0.2px #222222;transform-origin:0 23px;transform:scale(1.0747,1.000);">$117.63</span>
<span class="t" style="left:1186.10px;top:631.90px;font-size:24.9px;line-height:28px;color:#222222;-webkit-text-stroke:0.2px #222222;">m5a.xlarge</span>
<span class="t" style="left:1187.10px;top:675.90px;font-size:24.9px;line-height:28px;color:#222222;-webkit-text-stroke:0.2px #222222;transform-origin:0 23px;transform:scale(1.0208,1.000);">Autoscale (7-14)</span>
<span class="t" style="left:25.92px;top:799.08px;font-size:24.0px;line-height:27px;color:#7f94a0;-webkit-text-stroke:1.25px #7f94a0;letter-spacing:0.3px;transform-origin:0 22px;transform:scale(0.9033,1.000);">CPU TOTAL (%)</span>
<span class="t" style="left:816.09px;top:799.08px;font-size:24.0px;line-height:27px;color:#7f94a0;-webkit-text-stroke:1.25px #7f94a0;letter-spacing:0.3px;transform-origin:0 22px;transform:scale(0.9343,1.000);">NETWORK TOTAL (BITS/S)</span>
<span class="t" style="left:18.50px;top:845.90px;font-size:20.8px;line-height:23px;color:#5c5c5c;transform-origin:0 19px;transform:scale(1.0000,1.060);">150%</span>
<span class="t" style="left:18.50px;top:927.60px;font-size:20.8px;line-height:23px;color:#5c5c5c;transform-origin:0 19px;transform:scale(1.0000,1.060);">100%</span>
<span class="t" style="left:30.07px;top:1008.60px;font-size:20.8px;line-height:23px;color:#5c5c5c;transform-origin:0 19px;transform:scale(1.0000,1.060);">50%</span>
<span class="t" style="left:41.63px;top:1087.40px;font-size:20.8px;line-height:23px;color:#5c5c5c;transform-origin:0 19px;transform:scale(1.0000,1.060);">0%</span>
<span class="t" style="left:128.90px;top:1117.70px;font-size:20.8px;line-height:23px;color:#5c5c5c;transform-origin:0 19px;transform:scale(1.0000,1.060);">05/02</span>
<span class="t" style="left:279.40px;top:1117.70px;font-size:20.8px;line-height:23px;color:#5c5c5c;transform-origin:0 19px;transform:scale(1.0000,1.060);">05/09</span>
<span class="t" style="left:429.60px;top:1117.70px;font-size:20.8px;line-height:23px;color:#5c5c5c;transform-origin:0 19px;transform:scale(1.0000,1.060);">05/16</span>
<span class="t" style="left:580.30px;top:1117.70px;font-size:20.8px;line-height:23px;color:#5c5c5c;transform-origin:0 19px;transform:scale(1.0000,1.060);">05/23</span>
<span class="t" style="left:709.60px;top:1117.70px;font-size:20.8px;line-height:23px;color:#5c5c5c;transform-origin:0 19px;transform:scale(1.0000,1.060);">05/30</span>
<span class="t" style="left:809.42px;top:845.90px;font-size:20.8px;line-height:23px;color:#5c5c5c;transform-origin:0 19px;transform:scale(1.0000,1.060);">210GB</span>
<span class="t" style="left:809.42px;top:916.70px;font-size:20.8px;line-height:23px;color:#5c5c5c;transform-origin:0 19px;transform:scale(1.0000,1.060);">140GB</span>
<span class="t" style="left:820.99px;top:987.20px;font-size:20.8px;line-height:23px;color:#5c5c5c;transform-origin:0 19px;transform:scale(1.0000,1.060);">70GB</span>
<span class="t" style="left:848.73px;top:1055.40px;font-size:20.8px;line-height:23px;color:#5c5c5c;transform-origin:0 19px;transform:scale(1.0000,1.060);">0B</span>
<span class="t" style="left:930.00px;top:1085.50px;font-size:20.8px;line-height:23px;color:#5c5c5c;transform-origin:0 19px;transform:scale(1.0000,1.060);">05/02</span>
<span class="t" style="left:1077.70px;top:1085.50px;font-size:20.8px;line-height:23px;color:#5c5c5c;transform-origin:0 19px;transform:scale(1.0000,1.060);">05/09</span>
<span class="t" style="left:1225.70px;top:1085.50px;font-size:20.8px;line-height:23px;color:#5c5c5c;transform-origin:0 19px;transform:scale(1.0000,1.060);">05/16</span>
<span class="t" style="left:1373.90px;top:1085.50px;font-size:20.8px;line-height:23px;color:#5c5c5c;transform-origin:0 19px;transform:scale(1.0000,1.060);">05/23</span>
<span class="t" style="left:1500.50px;top:1085.50px;font-size:20.8px;line-height:23px;color:#5c5c5c;transform-origin:0 19px;transform:scale(1.0000,1.060);">05/30</span>
<span class="t" style="left:79.00px;top:1179.80px;font-size:24.0px;line-height:27px;color:#686868;">CPU Total</span>
<span class="t" style="left:271.90px;top:1179.80px;font-size:24.0px;line-height:27px;color:#686868;">Instance Count</span>
<span class="t" style="left:519.00px;top:1179.80px;font-size:24.0px;line-height:27px;color:#686868;">Recommended</span>
<span class="t" style="left:869.80px;top:1148.10px;font-size:24.0px;line-height:27px;color:#686868;">Network Total</span>
<span class="t" style="left:1116.50px;top:1148.10px;font-size:24.0px;line-height:27px;color:#686868;">Instance Count</span>
<span class="t" style="left:869.80px;top:1180.20px;font-size:24.0px;line-height:27px;color:#686868;">Recommended</span>
</body></html>
